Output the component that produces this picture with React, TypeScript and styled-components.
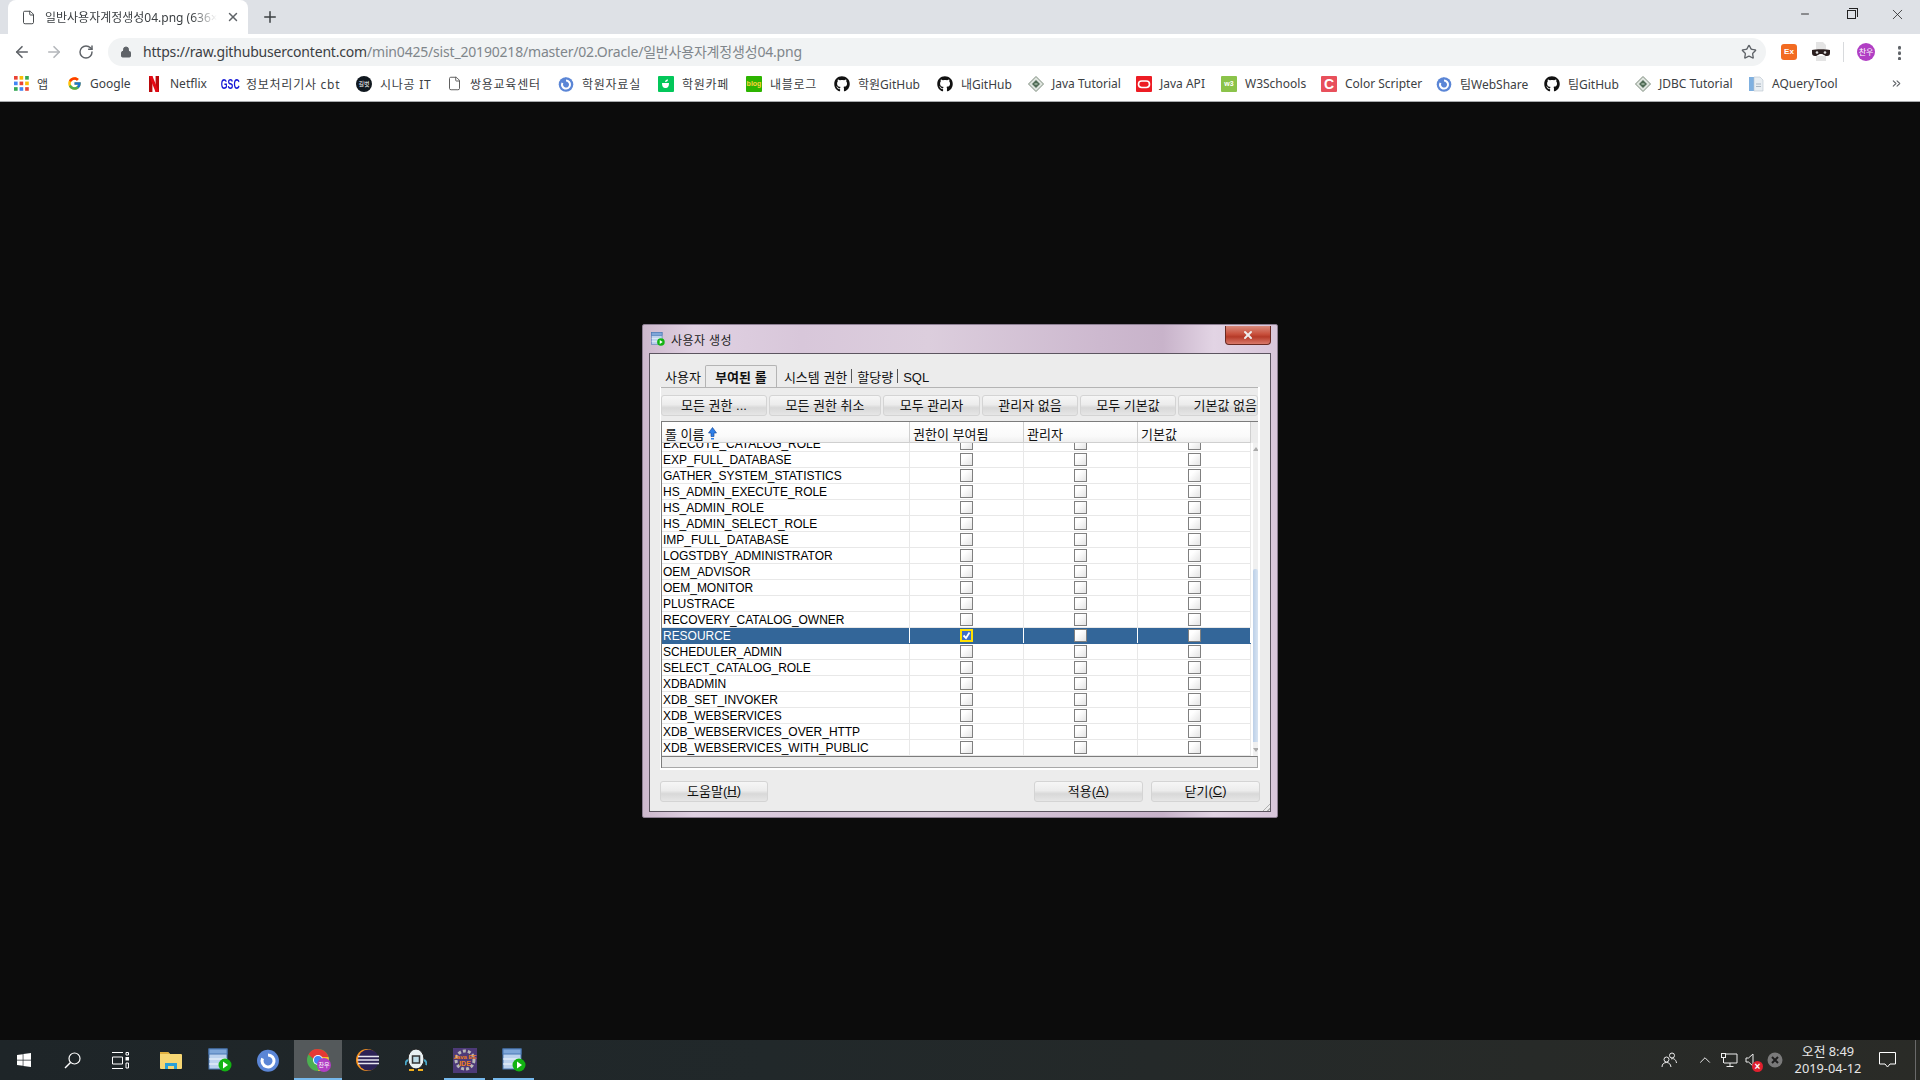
import React from 'react'
import styled, { createGlobalStyle } from 'styled-components'
import { ArrowLeft, ArrowRight, RotateCw, Star, Lock, Plus, X, Minus, File, ChevronUp, ChevronsRight } from 'lucide-react'
import { FaGithub, FaWindows } from 'react-icons/fa'
import { FcGoogle } from 'react-icons/fc'

const UI_FONT = `"Noto Sans", "Noto Sans CJK KR", sans-serif`
const DIALOG_FONT = `"Liberation Sans", "Noto Sans CJK KR", sans-serif`

const GlobalStyle = createGlobalStyle`
  html, body { margin: 0; padding: 0; background: #0c0c0c; }
  * { box-sizing: border-box; }
`

const Screen = styled.div`
  width: 1920px;
  height: 1080px;
  display: flex;
  flex-direction: column;
  overflow: hidden;
  font-family: ${UI_FONT};
`

/* ---------- browser ---------- */
const TabStrip = styled.div`
  height: 34px;
  background: #dee1e6;
  display: flex;
  align-items: flex-end;
  padding-left: 8px;
  flex-shrink: 0;
`
const Tab = styled.div`
  width: 240px;
  height: 34px;
  background: #fff;
  border-radius: 8px 8px 0 0;
  display: flex;
  align-items: center;
  padding-left: 13px;
  color: #3c4043;
`
const TabTitle = styled.span`
  width: 172px;
  margin-left: 9px;
  font-size: 12px;
  white-space: nowrap;
  overflow: hidden;
  -webkit-mask-image: linear-gradient(to right, #000 85%, transparent);
  mask-image: linear-gradient(to right, #000 85%, transparent);
`
const TabClose = styled.span`
  display: flex;
  margin-left: 9px;
  color: #5f6368;
`
const NewTab = styled.span`
  display: flex;
  margin: 0 0 8px 13px;
  color: #3c4043;
  height: 18px;
`
const WindowControls = styled.div`
  margin-left: auto;
  height: 34px;
  display: flex;
  color: #222;
`
const WindowButton = styled.span`
  width: 46px;
  height: 28px;
  display: flex;
  align-items: center;
  justify-content: center;
`
const RestoreGlyph = styled.span`
  width: 9px;
  height: 9px;
  border: 1px solid #222;
  position: relative;
  &::after {
    content: '';
    position: absolute;
    left: 1px;
    top: -3px;
    width: 8px;
    height: 8px;
    border-top: 1px solid #222;
    border-right: 1px solid #222;
  }
`
const Toolbar = styled.div`
  height: 32px;
  background: #fff;
  padding-top: 4px;
  display: flex;
  align-items: flex-start;
  flex-shrink: 0;
`
const NavButton = styled.span<{ $w: number; $dim?: boolean }>`
  width: ${p => p.$w}px;
  height: 28px;
  display: flex;
  align-items: center;
  justify-content: center;
  color: ${p => (p.$dim ? '#b4b7bb' : '#5f6368')};
  flex-shrink: 0;
`
const Omnibox = styled.div`
  width: 1658px;
  height: 28px;
  border-radius: 14px;
  background: #f1f3f4;
  display: flex;
  align-items: center;
  padding-left: 12px;
  color: #5f6368;
  flex-shrink: 0;
`
const UrlText = styled.span`
  margin-left: 11px;
  padding-bottom: 2px;
  font-size: 14px;
  letter-spacing: -0.19px;
  color: #80868b;
  white-space: nowrap;
`
const UrlHost = styled.span`
  color: #3c4043;
`
const OmniStar = styled.span`
  margin-left: auto;
  margin-right: 9px;
  display: flex;
  color: #5f6368;
`
const Extensions = styled.div`
  display: flex;
  align-items: center;
  height: 28px;
  margin-left: 15px;
`
const ExBadge = styled.span`
  width: 16px;
  height: 16px;
  border-radius: 3px;
  background: #f26b21;
  color: #fff;
  font: 700 8px/16px ${DIALOG_FONT};
  text-align: center;
`
const MaskSlot = styled.span`
  margin-left: 14px;
  display: flex;
`
const Separator = styled.span`
  width: 1px;
  height: 20px;
  background: #d8dadd;
  margin: 0 13px 0 12px;
`
const Avatar = styled.span<{ $size: number }>`
  width: ${p => p.$size}px;
  height: ${p => p.$size}px;
  border-radius: 50%;
  background: #b13fc4;
  color: #fff;
  font-size: ${p => Math.round(p.$size * 0.42)}px;
  line-height: ${p => p.$size}px;
  text-align: center;
  display: block;
  font-family: "Noto Sans CJK KR", sans-serif;
  overflow: hidden;
`
const MenuDots = styled.span`
  width: 3px;
  height: 15px;
  margin-left: 23px;
  background: radial-gradient(circle, #5f6368 1.5px, transparent 2px) 0 0 / 3px 5.5px;
`
const BookmarkBar = styled.div`
  height: 36px;
  background: #fff;
  border-bottom: 1px solid #a9abae;
  padding-left: 13px;
  display: flex;
  align-items: center;
  flex-shrink: 0;
  position: relative;
`
const Bookmark = styled.div<{ $w: number; $ko?: boolean }>`
  width: ${p => p.$w}px;
  display: flex;
  align-items: center;
  flex-shrink: 0;
  color: #3c4043;
  font-size: 12px;
  white-space: nowrap;
  letter-spacing: ${p => (p.$ko ? '0.75px' : '0')};
`
const BookmarkIcon = styled.span`
  width: 16px;
  height: 16px;
  display: flex;
  align-items: center;
  justify-content: center;
  margin-right: 8px;
  flex-shrink: 0;
`
const BookmarkMore = styled.span`
  margin-left: auto;
  margin-right: 17px;
  display: flex;
  color: #5f6368;
`
const SquareIcon = styled.span<{ $bg: string; $fg?: string }>`
  width: 16px;
  height: 16px;
  background: ${p => p.$bg};
  color: ${p => p.$fg || '#fff'};
  font: 700 7px/16px ${DIALOG_FONT};
  letter-spacing: 0;
  text-align: center;
  display: block;
  border-radius: 1px;
`
const ColorC = styled.b`
  font-size: 14px;
`
const GscMark = styled.span`
  color: #1518d6;
  font: 700 15px/16px ${DIALOG_FONT};
  letter-spacing: 0;
  transform: scaleX(0.58);
  white-space: nowrap;
`
const RoundMark = styled.span`
  width: 16px;
  height: 16px;
  border-radius: 50%;
  background: #10181f;
  color: #fff;
  font: 6px/16px "Noto Sans CJK KR", sans-serif;
  letter-spacing: 0;
  text-align: center;
`

/* ---------- desktop + dialog ---------- */
const Desktop = styled.div`
  flex: 1;
  background: #0c0c0c;
  position: relative;
`
const DialogWindow = styled.div`
  position: absolute;
  left: 642px;
  top: 222px;
  width: 636px;
  height: 494px;
  padding: 0 6px 5px 6px;
  display: flex;
  flex-direction: column;
  border: 1px solid #8d7f92;
  border-radius: 2px;
  font-family: ${DIALOG_FONT};
  background: linear-gradient(90deg, #cdb9cd 0%, #e0d1e2 8%, #d8c7da 25%, #dccedd 45%, #cdb9cf 72%, #c8b3ca 82%, #e2d4e4 90%, #d8c6da 100%);
`
const TitleBar = styled.div`
  height: 28px;
  display: flex;
  align-items: center;
  padding-left: 2px;
  font-size: 12px;
  color: #222;
  flex-shrink: 0;
`
const TitleText = styled.span`
  margin-left: 6px;
  letter-spacing: 0.4px;
`
const CloseButton = styled.span`
  position: absolute;
  top: 1px;
  right: 6px;
  width: 46px;
  height: 19px;
  border: 1px solid #6a2a22;
  border-top: none;
  border-radius: 0 0 4px 4px;
  background: linear-gradient(#d98a7c 0%, #c8503c 45%, #b53a28 60%, #d9796a 100%);
  display: flex;
  align-items: center;
  justify-content: center;
  color: #eee;
`
const Inner = styled.div`
  flex: 1;
  background: #ececec;
  border: 1px solid #5c5560;
  padding: 11px 10px 0 10px;
  display: flex;
  flex-direction: column;
`
const TabRow = styled.div`
  height: 22px;
  display: flex;
  align-items: center;
  padding-left: 1px;
  font-size: 13px;
  color: #111;
`
const DialogTab = styled.span<{ $active?: boolean; $sep?: boolean; $first?: boolean }>`
  height: 22px;
  line-height: 25px;
  padding: 0 ${p => (p.$first ? '4px' : '5px')};
  white-space: nowrap;
  font-weight: ${p => (p.$active ? 700 : 400)};
  ${p => p.$active && 'width: 72px; line-height: 23px; text-align: center; padding: 0; background: #ececec; border: 1px solid #b4b4b4; border-bottom: none; border-radius: 2px 2px 0 0; margin-right: 2px;'}
  ${p => p.$sep && 'position: relative; &::after { content: ""; position: absolute; right: 0; top: 4px; height: 14px; width: 1px; background: #555; }'}
`
const TabPanel = styled.div`
  width: 600px;
  height: 383px;
  background: #fff;
  padding: 0 2px 2px 1px;
  display: flex;
  flex-direction: column;
`
const ActionStrip = styled.div`
  height: 34px;
  background: #ececec;
  border-top: 1px solid #b4b4b4;
  padding-top: 7px;
  display: flex;
  gap: 2px;
  flex-shrink: 0;
`
const GlossButton = styled.span<{ $w: number; $right?: boolean }>`
  width: ${p => p.$w}px;
  height: 21px;
  flex-shrink: 0;
  display: flex;
  align-items: center;
  justify-content: ${p => (p.$right ? 'flex-end' : 'center')};
  padding-bottom: 2px;
  border: 1px solid #d4d4d4;
  border-radius: 3px;
  background: linear-gradient(#f6f6f6 0%, #ececec 45%, #d8d8d8 62%, #e6e6e6 100%);
  font-size: 13px;
  color: #111;
  white-space: nowrap;
  overflow: hidden;
  u { text-underline-offset: 1px; }
`
const Grid = styled.div`
  flex: 1;
  min-height: 0;
  display: flex;
  flex-direction: column;
  border-top: 1px solid #7c7c7c;
  border-left: 1px solid #7c7c7c;
  overflow: hidden;
`
const HeaderRow = styled.div`
  height: 21px;
  display: grid;
  grid-template-columns: 248px 114px 114px 113px 7px;
  background: linear-gradient(#fff, #fafafa 70%, #f0f0f0);
  border-bottom: 1px solid #cfcfcf;
  flex-shrink: 0;
  font-size: 13px;
  color: #111;
`
const HeaderCell = styled.div<{ $filler?: boolean }>`
  border-right: 1px solid #cfcfcf;
  padding: 2px 0 0 3px;
  display: flex;
  align-items: center;
  gap: 3px;
  ${p => p.$filler && 'background: #ececec; border-right: none;'}
`
const BodyWrap = styled.div`
  flex: 1;
  min-height: 0;
  display: grid;
  grid-template-columns: 589px 7px;
`
const Rows = styled.div`
  height: 313px;
  overflow: hidden;
  display: flex;
  flex-direction: column;
  justify-content: flex-end;
`
const Row = styled.div<{ $selected?: boolean }>`
  height: 16px;
  flex-shrink: 0;
  display: grid;
  grid-template-columns: 248px 114px 114px 113px;
  background: ${p => (p.$selected ? '#336699' : '#fff')};
  color: ${p => (p.$selected ? '#fff' : '#000')};
  border-bottom: 1px solid ${p => (p.$selected ? '#336699' : '#e8e8e8')};
  font-size: 12px;
  line-height: 17px;
`
const Cell = styled.div<{ $selected?: boolean }>`
  border-right: 1px solid ${p => (p.$selected ? '#fff' : '#e8e8e8')};
  padding-left: 1px;
  white-space: nowrap;
  overflow: hidden;
  letter-spacing: -0.03px;
`
const CheckCell = styled(Cell)`
  display: flex;
  justify-content: center;
  padding: 1px 0 0 0;
`
const Check = styled.span<{ $on?: boolean }>`
  width: 13px;
  height: 13px;
  display: flex;
  align-items: center;
  justify-content: center;
  border: ${p => (p.$on ? '2px solid #ffe000' : '1px solid #808080')};
  background: linear-gradient(135deg, #fff 30%, #e4e4e4);
`
const ScrollTrack = styled.div`
  height: 313px;
  background: linear-gradient(90deg, #fff 2px, #f0f0f0 2px);
  position: relative;
`
const ScrollArrow = styled.span<{ $down?: boolean }>`
  position: absolute;
  left: 2px;
  ${p => (p.$down ? 'bottom: 4px;' : 'top: 4px;')}
  width: 0;
  height: 0;
  border-left: 3px solid transparent;
  border-right: 3px solid transparent;
  ${p => (p.$down ? 'border-top: 4px solid #aaa;' : 'border-bottom: 4px solid #aaa;')}
`
const ScrollThumb = styled.span`
  position: absolute;
  left: 2px;
  right: 0;
  top: 126px;
  bottom: 14px;
  background: linear-gradient(90deg, #bcd0e8, #d8e4f2);
  border-radius: 2px 2px 0 0;
`
const HScroll = styled.div`
  height: 12px;
  flex-shrink: 0;
  background: #ececec;
  border-top: 1px solid #7c7c7c;
  border-bottom: 1px solid #a8a8a8;
  border-right: 1px solid #a8a8a8;
`
const FooterRow = styled.div`
  margin-top: 11px;
  height: 21px;
  display: flex;
  gap: 8px;
`
const FooterSpacer = styled.div`
  flex: 1;
`
const ResizeGrip = styled.span`
  position: absolute;
  right: 7px;
  bottom: 6px;
  width: 8px;
  height: 8px;
  background: repeating-linear-gradient(135deg, #b0b0b0 0 1px, transparent 1px 3px);
  clip-path: polygon(100% 0, 100% 100%, 0 100%);
`

/* ---------- taskbar ---------- */
const Taskbar = styled.div`
  height: 40px;
  flex-shrink: 0;
  background: linear-gradient(90deg, #1e2528 0%, #21282a 40%, #2a2b27 100%);
  display: flex;
  align-items: stretch;
  color: #fff;
`
const TaskItem = styled.div<{ $w?: number; $active?: boolean; $open?: boolean }>`
  width: ${p => p.$w || 49}px;
  flex-shrink: 0;
  display: flex;
  align-items: center;
  justify-content: center;
  position: relative;
  background: ${p => (p.$active ? '#54595b' : 'transparent')};
  ${p => (p.$active || p.$open) && `
    &::after {
      content: '';
      position: absolute;
      bottom: 0;
      left: ${p.$active ? 0 : 4}px;
      right: ${p.$active ? 0 : 4}px;
      height: 2px;
      background: #76b9ed;
    }
  `}
`
const Tray = styled.div`
  margin-left: auto;
  display: flex;
  align-items: center;
  height: 40px;
`
const TrayIcon = styled.span<{ $w: number }>`
  width: ${p => p.$w}px;
  display: flex;
  justify-content: center;
  align-items: center;
  position: relative;
  color: #eee;
`
const MuteBadge = styled.span`
  position: absolute;
  right: 0;
  bottom: -5px;
  width: 11px;
  height: 11px;
  border-radius: 50%;
  background: #e0202e;
  color: #fff;
  font: 700 10px/11px ${DIALOG_FONT};
  text-align: center;
`
const Clock = styled.div`
  width: 82px;
  text-align: center;
  font-size: 12.8px;
  line-height: 17px;
  color: #e6e6e6;
  white-space: nowrap;
`
const DesktopEdge = styled.span`
  width: 1px;
  height: 40px;
  background: #6a6a6a;
  margin: 0 4px 0 10px;
`

/* ---------- drawings ---------- */
const AppsIcon = () => (
  <svg width="15" height="15" viewBox="0 0 14 14">
    {['#ea4335', '#fbbc05', '#34a853', '#4285f4', '#ea4335', '#fbbc05', '#34a853', '#4285f4', '#ea4335'].map((c, i) => (
      <rect key={i} x={(i % 3) * 5.2} y={Math.floor(i / 3) * 5.2} width="3.4" height="3.4" fill={c} />
    ))}
  </svg>
)
const NetflixIcon = () => (
  <svg width="10" height="16" viewBox="0 0 10 16">
    <path d="M0 0h3.4v16L0 16zM6.6 0H10v16H6.6z" fill="#b9090b" />
    <path d="M0 0h3.4L10 16H6.6z" fill="#e50914" />
  </svg>
)
const RingIcon = ({ size = 16 }: { size?: number }) => (
  <svg width={size} height={size} viewBox="0 0 16 16">
    <circle cx="8" cy="8.5" r="7.3" fill="#5b86d6" />
    <path d="M5.2 5.2 L8 1 L9 5z" fill="#5b86d6" />
    <path d="M8 4.6a4 4 0 1 1-3.6 2.3" fill="none" stroke="#fff" strokeWidth="2" />
    <circle cx="8" cy="8.6" r="1.4" fill="#5b86d6" />
  </svg>
)
const CafeIcon = () => (
  <SquareIcon $bg="#03c75a">
    <svg width="16" height="16" viewBox="0 0 16 16">
      <path d="M4 7h7c0 4-1.5 5-3.5 5S4 11 4 7z" fill="#fff" />
      <path d="M7 6c0-2 2-2.5 3-2.5C10 5 9 6 7 6z" fill="#fff" />
    </svg>
  </SquareIcon>
)
const DiamondIcon = () => (
  <svg width="16" height="16" viewBox="0 0 16 16">
    <path d="M8 .5 15.5 8 8 15.5.5 8z" fill="#dfe5df" stroke="#7d8a7d" />
    <path d="M8 4 12 8 8 12 4 8z" fill="#4f6b55" />
    <path d="M6.5 8h3" stroke="#cfe0cf" />
  </svg>
)
const OracleIcon = () => (
  <SquareIcon $bg="#ed1c24">
    <svg width="16" height="16" viewBox="0 0 16 16">
      <rect x="2.5" y="5" width="11" height="6.5" rx="3.2" fill="none" stroke="#fff" strokeWidth="1.6" />
    </svg>
  </SquareIcon>
)
const PagesIcon = () => (
  <svg width="16" height="16" viewBox="0 0 16 16">
    <path d="M1 1h5v14H1z" fill="#7fb0e0" />
    <path d="M6 1h6l3 3v11H6z" fill="#e9eef2" stroke="#b8c2cc" strokeWidth=".6" />
    <path d="M8 8h5M8 10.5h5" stroke="#aab6c2" />
  </svg>
)
const MaskIcon = () => (
  <svg width="20" height="22" viewBox="0 0 20 22">
    <path d="M5 1h7l3 3v4H5zM5 15h10v5H5z" fill="#e4e4e4" />
    <path d="M1 9c3-1 15-1 18 0v3c0 2-1 3-3 3-3 0-3-2-6-2s-3 2-6 2c-2 0-3-1-3-3z" fill="#2b1f1f" />
    <circle cx="6" cy="11.5" r="1.3" fill="#ddd" /><circle cx="14" cy="11.5" r="1.3" fill="#ddd" />
  </svg>
)
const SqlIcon = ({ size }: { size: number }) => (
  <svg width={size} height={size} viewBox="0 0 24 24">
    <rect x="1" y="1" width="18" height="20" fill="#bcd2ee" stroke="#4a78b4" />
    <rect x="1" y="1" width="18" height="5" fill="#7ea6d8" stroke="#4a78b4" />
    <path d="M1 11h18M1 16h18" stroke="#f4f8fc" />
    <circle cx="17" cy="17" r="6.500" fill="#13b313" />
    <path d="M15 13.500v7l5-3.500z" fill="#fff" />
  </svg>
)
const FolderIcon = () => (
  <svg width="22" height="20" viewBox="0 0 22 20">
    <path d="M0 3a1 1 0 0 1 1-1h7l2 2h11a1 1 0 0 1 1 1v13a1 1 0 0 1-1 1H1a1 1 0 0 1-1-1z" fill="#f7d774" />
    <path d="M0 2h8l2 2H0z" fill="#e0b040" />
    <path d="M5 19v-6h12v6h-3v-3H8v3z" fill="#2aa0d8" />
  </svg>
)
const TaskViewIcon = () => (
  <svg width="17" height="17" viewBox="0 0 17 17" fill="none" stroke="#fff" strokeWidth="1">
    <path d="M0 .5h11M0 16.500h11M.5 5h10v7H.5zM14 .5h2.500v2.500H14z" />
    <rect x="14" y="5.500" width="2.500" height="2.500" fill="#fff" />
    <path d="M14 11h2.500v5H14z" />
  </svg>
)
const SearchIcon = () => (
  <svg width="17" height="17" viewBox="0 0 17 17" fill="none" stroke="#fff" strokeWidth="1.2">
    <circle cx="10.500" cy="6.500" r="5.500" />
    <path d="M6.500 10.500 1 16" strokeWidth="1.500" />
  </svg>
)
const ChromeIcon = () => (
  <svg width="24" height="24" viewBox="0 0 24 24">
    <circle cx="12" cy="12" r="11" fill="#4caf50" />
    <path d="M2.500 6.500A11 11 0 0 1 22.500 9H12a4 4 0 0 0-4 2.500z" fill="#e53935" />
    <path d="M22.500 9A11 11 0 0 1 12 23l4-8a4 4 0 0 0-1-6z" fill="#fbc02d" />
    <circle cx="12" cy="12" r="5" fill="#fff" /><circle cx="12" cy="12" r="4" fill="#4285f4" />
  </svg>
)
const ChromeBadge = styled.span`
  position: absolute;
  left: 23px;
  top: 18px;
`
const EclipseIcon = () => (
  <svg width="24" height="24" viewBox="0 0 24 24">
    <circle cx="12" cy="12" r="11" fill="#f79421" />
    <circle cx="13.500" cy="12" r="10.500" fill="#2c2255" />
    <path d="M3 8.500h21M2.500 12h22M3 15.500h21" stroke="#e8e6f0" strokeWidth="1.500" />
  </svg>
)
const PenguinIcon = () => (
  <svg width="22" height="24" viewBox="0 0 22 24">
    <ellipse cx="11" cy="11" rx="8" ry="10" fill="#e8f0f2" stroke="#222" />
    <path d="M3 12c-2 1-3 3-2 5M19 12c2 1 3 3 2 5" stroke="#4aa8c8" strokeWidth="2" fill="none" />
    <rect x="7.500" y="8" width="7" height="7" fill="#bcdce8" stroke="#333" strokeWidth="1.500" />
    <path d="M4 22h5M13 22h5" stroke="#f2b01e" strokeWidth="2" />
  </svg>
)
const JavaIdeIcon = () => (
  <svg width="24" height="25" viewBox="0 0 24 25">
    <rect width="24" height="25" fill="#4d3a78" />
    <circle cx="12" cy="12" r="9" fill="none" stroke="#b8b8b8" strokeWidth="3" strokeDasharray="3 2" />
    <text x="12" y="11" fontSize="6" fontWeight="700" fill="#f08020" textAnchor="middle" fontFamily="Liberation Sans">Java EE</text>
    <text x="12" y="18" fontSize="7" fontWeight="700" fill="#f08020" textAnchor="middle" fontFamily="Liberation Sans">IDE</text>
  </svg>
)
const SpeakerIcon = () => (
  <svg width="14" height="14" viewBox="0 0 14 14" fill="none" stroke="#eee">
    <path d="M1 5h2.500L8 1v12L3.500 9H1z" />
  </svg>
)
const NetworkIcon = () => (
  <svg width="17" height="14" viewBox="0 0 17 14" fill="none" stroke="#eee">
    <path d="M4.500 1H16v9H3M9 10v3M5.500 13.500h7" />
    <rect x=".5" y=".5" width="4" height="4" fill="#2a2b27" />
    <path d="M2.500 4.500V10" />
  </svg>
)
const PeopleIcon = () => (
  <svg width="16" height="16" viewBox="0 0 16 16" fill="none" stroke="#eee">
    <circle cx="11" cy="3.500" r="2.500" />
    <circle cx="5.500" cy="7.500" r="2.500" />
    <path d="M1 15c0-3 2-4.500 4.500-4.500S9.500 12 10 15M10 7c2-1 5 0 5.500 4" />
  </svg>
)
const CrossCircleIcon = () => (
  <svg width="16" height="16" viewBox="0 0 16 16">
    <circle cx="8" cy="8" r="7.500" fill="#7a7a7a" />
    <path d="M5 5l6 6M11 5l-6 6" stroke="#1e1e1e" strokeWidth="2" />
  </svg>
)
const NoticeIcon = () => (
  <svg width="17" height="16" viewBox="0 0 17 16" fill="none" stroke="#fff">
    <path d="M.5.500h16v11.500h-5.500L8.500 15 6 12H.5z" />
  </svg>
)
const SortArrow = () => (
  <svg width="9" height="13" viewBox="0 0 9 13">
    <path d="M4.500.5 8.500 6H6v3.500H3V6H.5z" fill="#2f80e8" stroke="#0a3e90" strokeWidth=".6" />
    <path d="M3 11h3v1.500H3z" fill="#2f80e8" />
  </svg>
)
const CheckMark = () => (
  <svg width="9" height="9" viewBox="0 0 9 9">
    <rect width="9" height="9" fill="#3f6fc8" />
    <path d="M1.500 4.500 4 7l3.500-5.500" fill="none" stroke="#fff" strokeWidth="1.800" />
  </svg>
)

/* ---------- data ---------- */
const bookmarks: { label: string; w: number; ko?: boolean; icon: React.ReactNode }[] = [
  { label: '앱', w: 53, ko: true, icon: <AppsIcon /> },
  { label: 'Google', w: 80, icon: <FcGoogle size={15} /> },
  { label: 'Netflix', w: 76, icon: <NetflixIcon /> },
  { label: '정보처리기사 cbt', w: 134, ko: true, icon: <GscMark>GSC</GscMark> },
  { label: '시나공 IT', w: 90, ko: true, icon: <RoundMark>길벗</RoundMark> },
  { label: '쌍용교육센터', w: 112, ko: true, icon: <File size={15} color="#555" strokeWidth={1.5} /> },
  { label: '학원자료실', w: 100, ko: true, icon: <RingIcon /> },
  { label: '학원카페', w: 88, ko: true, icon: <CafeIcon /> },
  { label: '내블로그', w: 88, ko: true, icon: <SquareIcon $bg="#2db400" $fg="#ffd23c">blog</SquareIcon> },
  { label: '학원GitHub', w: 103, icon: <FaGithub size={16} color="#111" /> },
  { label: '내GitHub', w: 91, icon: <FaGithub size={16} color="#111" /> },
  { label: 'Java Tutorial', w: 108, icon: <DiamondIcon /> },
  { label: 'Java API', w: 85, icon: <OracleIcon /> },
  { label: 'W3Schools', w: 100, icon: <SquareIcon $bg="#8bc34a">w3</SquareIcon> },
  { label: 'Color Scripter', w: 115, icon: <SquareIcon $bg="#e8505b"><ColorC>C</ColorC></SquareIcon> },
  { label: '팀WebShare', w: 108, icon: <RingIcon /> },
  { label: '팀GitHub', w: 91, icon: <FaGithub size={16} color="#111" /> },
  { label: 'JDBC Tutorial', w: 113, icon: <DiamondIcon /> },
  { label: 'AQueryTool', w: 90, icon: <PagesIcon /> },
]

const actions = [
  { label: '모든 권한 ...', w: 106 },
  { label: '모든 권한 취소', w: 112 },
  { label: '모두 관리자', w: 97 },
  { label: '관리자 없음', w: 96 },
  { label: '모두 기본값', w: 96 },
  { label: '기본값 없음', w: 80, right: true },
]

const roles = [
  'EXECUTE_CATALOG_ROLE', 'EXP_FULL_DATABASE', 'GATHER_SYSTEM_STATISTICS', 'HS_ADMIN_EXECUTE_ROLE',
  'HS_ADMIN_ROLE', 'HS_ADMIN_SELECT_ROLE', 'IMP_FULL_DATABASE', 'LOGSTDBY_ADMINISTRATOR', 'OEM_ADVISOR',
  'OEM_MONITOR', 'PLUSTRACE', 'RECOVERY_CATALOG_OWNER', 'RESOURCE', 'SCHEDULER_ADMIN',
  'SELECT_CATALOG_ROLE', 'XDBADMIN', 'XDB_SET_INVOKER', 'XDB_WEBSERVICES', 'XDB_WEBSERVICES_OVER_HTTP',
  'XDB_WEBSERVICES_WITH_PUBLIC',
]

const App = () => {
  return (
    <Screen>
      <GlobalStyle />
      <TabStrip>
        <Tab>
          <File size={15} strokeWidth={1.5} />
          <TabTitle>일반사용자계정생성04.png (636×487)</TabTitle>
          <TabClose><X size={14} strokeWidth={2.5} /></TabClose>
        </Tab>
        <NewTab><Plus size={18} strokeWidth={2} /></NewTab>
        <WindowControls>
          <WindowButton><Minus size={12} strokeWidth={1.8} /></WindowButton>
          <WindowButton><RestoreGlyph /></WindowButton>
          <WindowButton><X size={17} strokeWidth={1.1} /></WindowButton>
        </WindowControls>
      </TabStrip>

      <Toolbar>
        <NavButton $w={44}><ArrowLeft size={18} strokeWidth={2.2} /></NavButton>
        <NavButton $w={20} $dim><ArrowRight size={18} strokeWidth={2.2} /></NavButton>
        <NavButton $w={44}><RotateCw size={16} strokeWidth={2.2} /></NavButton>
        <Omnibox>
          <Lock size={12} fill="#5f6368" strokeWidth={2} />
          <UrlText><UrlHost>https://raw.githubusercontent.com</UrlHost>/min0425/sist_20190218/master/02.Oracle/일반사용자계정생성04.png</UrlText>
          <OmniStar><Star size={16} strokeWidth={2} /></OmniStar>
        </Omnibox>
        <Extensions>
          <ExBadge>Ex</ExBadge>
          <MaskSlot><MaskIcon /></MaskSlot>
          <Separator />
          <Avatar $size={18}>찬우</Avatar>
          <MenuDots />
        </Extensions>
      </Toolbar>

      <BookmarkBar>
        {bookmarks.map(b => (
          <Bookmark key={b.label} $w={b.w} $ko={b.ko}>
            <BookmarkIcon>{b.icon}</BookmarkIcon>
            {b.label}
          </Bookmark>
        ))}
        <BookmarkMore><ChevronsRight size={13} strokeWidth={2} /></BookmarkMore>
      </BookmarkBar>

      <Desktop>
        <DialogWindow>
          <TitleBar>
            <SqlIcon size={14} />
            <TitleText>사용자 생성</TitleText>
          </TitleBar>
          <CloseButton><X size={12} strokeWidth={4} /></CloseButton>
          <Inner>
            <TabRow>
              <DialogTab $first>사용자</DialogTab>
              <DialogTab $active>부여된 롤</DialogTab>
              <DialogTab $sep>시스템 권한</DialogTab>
              <DialogTab $sep>할당량</DialogTab>
              <DialogTab>SQL</DialogTab>
            </TabRow>
            <TabPanel>
              <ActionStrip>
                {actions.map(a => (
                  <GlossButton key={a.label} $w={a.w} $right={a.right}>{a.label}</GlossButton>
                ))}
              </ActionStrip>
              <Grid>
                <HeaderRow>
                  <HeaderCell>롤 이름 <SortArrow /></HeaderCell>
                  <HeaderCell>권한이 부여됨</HeaderCell>
                  <HeaderCell>관리자</HeaderCell>
                  <HeaderCell>기본값</HeaderCell>
                  <HeaderCell $filler />
                </HeaderRow>
                <BodyWrap>
                  <Rows>
                    {roles.map(role => {
                      const selected = role === 'RESOURCE'
                      return (
                        <Row key={role} $selected={selected}>
                          <Cell $selected={selected}>{role}</Cell>
                          <CheckCell $selected={selected}><Check $on={selected}>{selected && <CheckMark />}</Check></CheckCell>
                          <CheckCell $selected={selected}><Check /></CheckCell>
                          <CheckCell $selected={selected}><Check /></CheckCell>
                        </Row>
                      )
                    })}
                  </Rows>
                  <ScrollTrack>
                    <ScrollArrow />
                    <ScrollThumb />
                    <ScrollArrow $down />
                  </ScrollTrack>
                </BodyWrap>
                <HScroll />
              </Grid>
            </TabPanel>
            <FooterRow>
              <GlossButton $w={108}>도움말(<u>H</u>)</GlossButton>
              <FooterSpacer />
              <GlossButton $w={109}>적용(<u>A</u>)</GlossButton>
              <GlossButton $w={109}>닫기(<u>C</u>)</GlossButton>
            </FooterRow>
          </Inner>
          <ResizeGrip />
        </DialogWindow>
      </Desktop>

      <Taskbar>
        <TaskItem $w={48}><FaWindows size={16} /></TaskItem>
        <TaskItem $w={48}><SearchIcon /></TaskItem>
        <TaskItem $w={48}><TaskViewIcon /></TaskItem>
        <TaskItem $w={54}><FolderIcon /></TaskItem>
        <TaskItem $w={44}><SqlIcon size={24} /></TaskItem>
        <TaskItem $w={52}><RingIcon size={24} /></TaskItem>
        <TaskItem $w={48} $active>
          <ChromeIcon />
          <ChromeBadge><Avatar $size={14}>찬우</Avatar></ChromeBadge>
        </TaskItem>
        <TaskItem><EclipseIcon /></TaskItem>
        <TaskItem><PenguinIcon /></TaskItem>
        <TaskItem $open><JavaIdeIcon /></TaskItem>
        <TaskItem $open><SqlIcon size={24} /></TaskItem>
        <Tray>
          <TrayIcon $w={24}><PeopleIcon /></TrayIcon>
          <TrayIcon $w={12} />
          <TrayIcon $w={24}><ChevronUp size={18} strokeWidth={1.3} /></TrayIcon>
          <TrayIcon $w={24}><NetworkIcon /></TrayIcon>
          <TrayIcon $w={22}><SpeakerIcon /><MuteBadge>×</MuteBadge></TrayIcon>
          <TrayIcon $w={24}><CrossCircleIcon /></TrayIcon>
          <Clock>
            <div>오전 8:49</div>
            <div>2019-04-12</div>
          </Clock>
          <TrayIcon $w={36}><NoticeIcon /></TrayIcon>
          <DesktopEdge />
        </Tray>
      </Taskbar>
    </Screen>
  )
}

export default App
